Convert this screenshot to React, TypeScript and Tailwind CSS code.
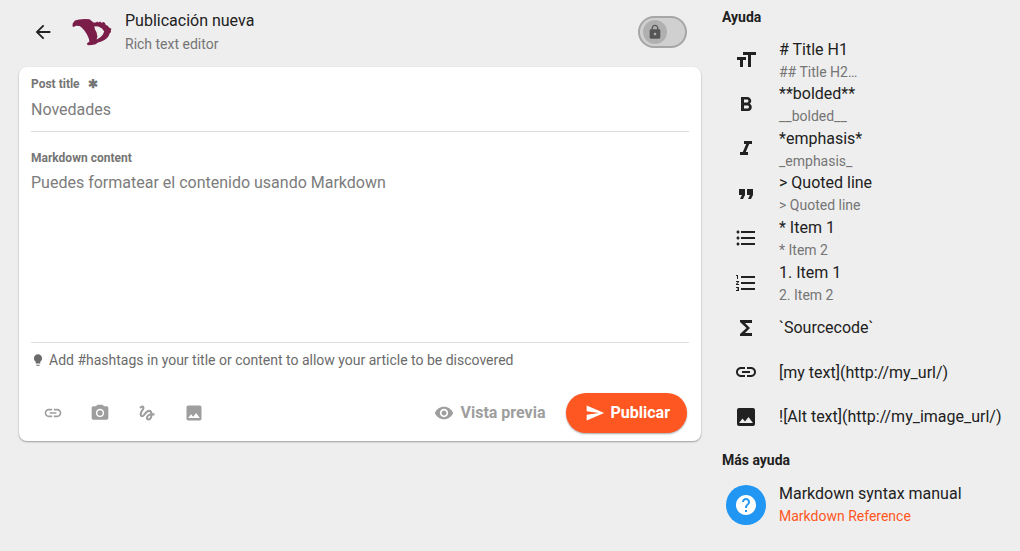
import type { ReactNode } from 'react';
import {
  MdArrowBack,
  MdFormatBold,
  MdFormatItalic,
  MdFormatListBulleted,
  MdFormatListNumbered,
  MdFormatQuote,
  MdFormatSize,
  MdFunctions,
  MdGesture,
  MdHelp,
  MdImage,
  MdLightbulb,
  MdLink,
  MdLock,
  MdPhotoCamera,
  MdSend,
  MdVisibility,
} from 'react-icons/md';

type Hint = { icon: ReactNode; title: string; note?: string };

const hints: Hint[] = [
  { icon: <MdFormatSize />, title: '# Title H1', note: '## Title H2…' },
  { icon: <MdFormatBold />, title: '**bolded**', note: '__bolded__' },
  { icon: <MdFormatItalic />, title: '*emphasis*', note: '_emphasis_' },
  { icon: <MdFormatQuote />, title: '> Quoted line', note: '> Quoted line' },
  { icon: <MdFormatListBulleted />, title: '* Item 1', note: '* Item 2' },
  { icon: <MdFormatListNumbered />, title: '1. Item 1', note: '2. Item 2' },
  { icon: <MdFunctions />, title: '`Sourcecode`' },
  { icon: <MdLink />, title: '[my text](http://my_url/)' },
  { icon: <MdImage />, title: '![Alt text](http://my_image_url/)' },
];

const tools = [
  { label: 'Link', icon: <MdLink /> },
  { label: 'Camera', icon: <MdPhotoCamera /> },
  { label: 'Drawing', icon: <MdGesture /> },
  { label: 'Image', icon: <MdImage /> },
];

function Logo() {
  return (
    <svg viewBox="0 0 40 28" className="h-7 w-10 shrink-0" aria-hidden="true">
      <path
        fill="#7b1d49"
        fillRule="evenodd"
        d="M0.4 8.2 L0.8 5.2 L3 2.6 L7 1.4 L13 0.9 L17.5 1.2 L20 3.2 L21.4 4.6 L24 4.4 L25.2 3.4 L26.4 4.6 L28 3.6 L29.4 4.8 L31.6 4 L33 5 L33.8 7 L35.8 7.8 L37 9.4 L39.4 10.8 L38.8 12.6 L39 14 L37.6 15.6 L36.8 17.8 L34.8 20.2 L32.4 22 L29.4 23.6 L26 24.4 L23.6 26.2 L20 27 L15.8 27.2 L14.8 25.6 L17.4 23.4 L16.8 20.4 L15 16.6 L12.4 12.4 L9.6 9.6 L7.6 8 L4 7.8 L1.6 9 Z M22.4 8.2 L26.4 8.6 L30 10.4 L32.2 13.4 L30.8 16.8 L28.4 19.2 L24.6 21.4 L25.4 18.4 L24.6 14.4 L22.8 11 Z"
      />
    </svg>
  );
}

export default function App() {
  return (
    <div className="flex min-h-screen bg-[#eeeeee] font-['Roboto',sans-serif] text-[#212121]">
      <main className="min-w-0 flex-1 pl-[19px]">
        <header className="flex h-[67px] items-center pr-[14px] pb-[3px]">
          <button type="button" aria-label="Volver" className="ml-[13px] text-[22px]">
            <MdArrowBack />
          </button>
          <div className="ml-[18px] flex">
            <Logo />
          </div>
          <div className="ml-[13px]">
            <h1 className="text-base leading-6">Publicación nueva</h1>
            <p className="text-sm leading-[23px] text-[#757575]">Rich text editor</p>
          </div>
          <label className="relative ml-auto flex h-8 w-[49px] cursor-pointer items-center rounded-full border-2 border-[#a6a6a6] bg-[#d0d0d0] pl-[3px]">
            <input type="checkbox" aria-label="Privado" className="absolute inset-0 appearance-none rounded-full" />
            <span className="flex size-6 items-center justify-center rounded-full bg-[#b0b0b0] text-base text-[#555555]">
              <MdLock />
            </span>
          </label>
        </header>

        <form className="rounded-lg bg-white px-3 pt-2 pb-2 shadow-[0_1px_2px_rgba(0,0,0,0.35)]">
          <div className="flex flex-col">
            <label htmlFor="title" className="text-xs leading-[18px] font-bold text-[#757575]">
              Post title<span className="ml-2">✱</span>
            </label>
            <input
              id="title"
              placeholder="Novedades"
              className="h-[39px] border-b border-[#dcdcdc] bg-transparent pb-[5px] text-base outline-none placeholder:text-[#7c7c7c]"
            />
          </div>
          <div className="mt-[17px] flex flex-col">
            <label htmlFor="content" className="text-xs leading-[18px] font-bold text-[#757575]">
              Markdown content
            </label>
            <textarea
              id="content"
              placeholder="Puedes formatear el contenido usando Markdown"
              className="h-44 resize-none border-b border-[#dcdcdc] bg-transparent pt-1 text-base leading-6 outline-none placeholder:text-[#7c7c7c]"
            />
          </div>
          <p className="mt-[5px] flex items-center gap-1 text-sm leading-6 text-[#6b6b6b]">
            <MdLightbulb className="size-[14px]" />
            Add #hashtags in your title or content to allow your article to be discovered
          </p>
          <div className="mt-[21px] flex items-center pr-[2px]">
            <div className="flex gap-[27px] pl-3 text-xl text-[#9e9e9e]">
              {tools.map((tool) => (
                <button key={tool.label} type="button" aria-label={tool.label}>
                  {tool.icon}
                </button>
              ))}
            </div>
            <button type="button" className="ml-auto flex items-center gap-[6px] text-base font-bold text-[#9e9e9e]">
              <MdVisibility className="size-5" />
              Vista previa
            </button>
            <button
              type="button"
              className="ml-5 flex h-10 items-center gap-[6px] rounded-full bg-[#ff5722] pr-[17px] pl-[19px] text-base font-bold text-white shadow-[0_1px_2px_rgba(0,0,0,0.35)]"
            >
              <MdSend className="size-5" />
              Publicar
            </button>
          </div>
        </form>
      </main>

      <aside className="w-[319px] shrink-0 pt-[7px] pl-[21px]">
        <h2 className="text-sm leading-5 font-bold">Ayuda</h2>
        <ul className="mt-[11px] grid h-[401px] auto-rows-fr">
          {hints.map((hint) => (
            <li key={hint.title} className="flex items-center">
              <span className="flex w-12 shrink-0 justify-center text-2xl">{hint.icon}</span>
              <div className="ml-[9px] whitespace-nowrap">
                <p className="text-base leading-[23px]">{hint.title}</p>
                {hint.note && <p className="text-sm leading-[22px] text-[#757575]">{hint.note}</p>}
              </div>
            </li>
          ))}
        </ul>
        <h2 className="mt-[11px] text-sm leading-5 font-bold">Más ayuda</h2>
        <a href="#markdown" className="mt-3 flex items-center">
          <span className="flex w-12 shrink-0 justify-center">
            <span className="flex size-10 items-center justify-center rounded-full bg-[#2196f3] text-2xl text-white">
              <MdHelp />
            </span>
          </span>
          <span className="ml-[9px] flex flex-col">
            <span className="text-base leading-[23px]">Markdown syntax manual</span>
            <span className="text-sm leading-[22px] text-[#ff5722]">Markdown Reference</span>
          </span>
        </a>
      </aside>
    </div>
  );
}
